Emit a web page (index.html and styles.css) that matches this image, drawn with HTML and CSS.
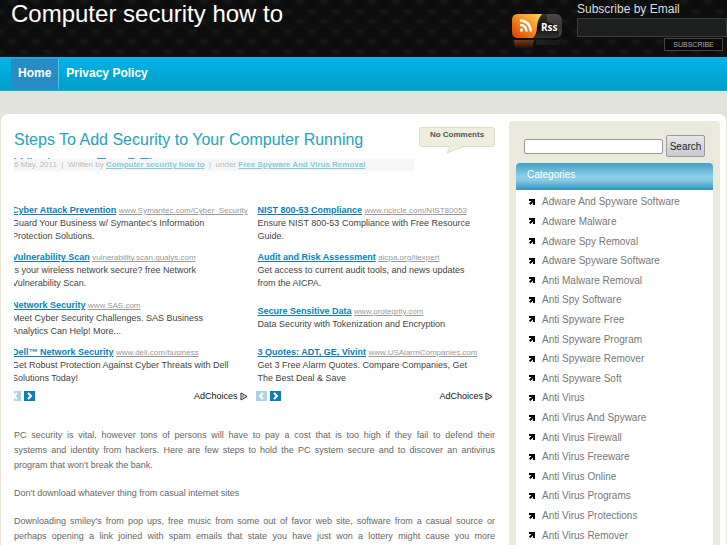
FILE: index.html
```html
<!DOCTYPE html>
<html lang="en">
<head>
<meta charset="utf-8">
<meta name="viewport" content="width=device-width, initial-scale=1">
<title>Computer security how to</title>
<link rel="stylesheet" href="styles.css">
</head>
<body>
<header class="header">
  <h1 class="site-title">Computer security how to</h1>
  <a class="rss" href="#" aria-label="Rss">
    <svg width="52" height="42" viewBox="0 0 52 42">
      <defs>
        <linearGradient id="dark" x1="0" y1="0" x2="0" y2="1"><stop offset="0" stop-color="#333"/><stop offset=".55" stop-color="#0d0d0d"/><stop offset="1" stop-color="#333"/></linearGradient>
        <linearGradient id="fire" x1="0" y1="1" x2="1" y2="0"><stop offset="0" stop-color="#d63c08"/><stop offset=".5" stop-color="#f78a1c"/><stop offset="1" stop-color="#ffd65a"/></linearGradient>
        <linearGradient id="glow" x1="0" y1="0" x2="0" y2="1"><stop offset="0" stop-color="#a34c10" stop-opacity=".7"/><stop offset="1" stop-color="#a34c10" stop-opacity="0"/></linearGradient>
      </defs>
      <rect x="1" y="1" width="50" height="24" rx="7" fill="url(#dark)"/>
      <path d="M36 1H44Q51 1 51 8V19Q51 22 48 24Q49 12 36 9Z" fill="#666" opacity=".45"/>
      <path d="M7 1H31Q27 6 26 13Q26 21 22 25H7Q1 25 1 19V7Q1 1 7 1Z" fill="url(#fire)"/>
      <path d="M3 27H23L21 36H4Z" fill="url(#glow)"/>
      <path d="M25 27H49L48 32H25Z" fill="#333" opacity=".4"/>
      <circle cx="10.500" cy="17" r="1.700" fill="#fff"/>
      <path d="M9 12Q15 12 15.500 18.500M9 7.500Q19 8 20 18.500" fill="none" stroke="#fff" stroke-width="2.400"/>
      <text x="30" y="18" class="rss-text">Rss</text>
    </svg>
  </a>
  <form class="subscribe">
    <label for="email">Subscribe by Email</label>
    <input id="email" type="text">
    <button type="button">SUBSCRIBE</button>
  </form>
</header>
<nav class="nav">
  <a class="current" href="#">Home</a>
  <a href="#">Privacy Policy</a>
</nav>
<div class="page">
  <main class="content">
    <div class="post-head">
      <h2><a href="#">Steps To Add Security to Your Computer Running Windows – Top 5 Tips</a></h2>
      <a class="comments" href="#">No Comments
        <svg width="17" height="8" viewBox="0 0 17 8"><path d="M4 0L1 7L17 0Z" fill="#eeeedf"/><path d="M4 1L1 7L16 1" fill="none" stroke="#d9dac6"/></svg>
      </a>
    </div>
    <p class="meta">6 May, 2011 &nbsp;|&nbsp; Written by <a href="#">Computer security how to</a> &nbsp;|&nbsp; under <a href="#">Free Spyware And Virus Removal</a></p>
    <div class="ads">
      <section class="ad first">
        <div class="list">
          <div><a href="#">Cyber Attack Prevention</a> <a class="url" href="#">www.Symantec.com/Cyber_Security</a><p>Guard Your Business w/ Symantec's Information<br>Protection Solutions.</p></div>
          <div><a href="#">Vulnerability Scan</a> <a class="url" href="#">vulnerability.scan.qualys.com</a><p>Is your wireless network secure? free Network<br>Vulnerability Scan.</p></div>
          <div><a href="#">Network Security</a> <a class="url" href="#">www.SAS.com</a><p>Meet Cyber Security Challenges. SAS Business<br>Analytics Can Help! More...</p></div>
          <div><a href="#">Dell™ Network Security</a> <a class="url" href="#">www.dell.com/business</a><p>Get Robust Protection Against Cyber Threats with Dell<br>Solutions Today!</p></div>
        </div>
        <div class="ad-foot">
          <button type="button" class="prev" aria-label="Previous"><svg width="11" height="10" viewBox="0 0 11 10"><path d="M7 2L4 5L7 8"/></svg></button>
          <button type="button" aria-label="Next"><svg width="11" height="10" viewBox="0 0 11 10"><path d="M4 2L7 5L4 8"/></svg></button>
          <a href="#">AdChoices <svg width="8" height="9" viewBox="0 0 8 9"><path d="M1 1L7 4.500L1 8ZM3 3.500V5.500" fill="none" stroke="#222"/></svg></a>
        </div>
      </section>
      <section class="ad">
        <div class="list">
          <div><a href="#">NIST 800-53 Compliance</a> <a class="url" href="#">www.ncircle.com/NIST80053</a><p>Ensure NIST 800-53 Compliance with Free Resource<br>Guide.</p></div>
          <div><a href="#">Audit and Risk Assessment</a> <a class="url" href="#">aicpa.org/itexpert</a><p>Get access to current audit tools, and news updates<br>from the AICPA.</p></div>
          <div class="short"><a href="#">Secure Sensitive Data</a> <a class="url" href="#">www.protegrity.com</a><p>Data Security with Tokenization and Encryption</p></div>
          <div><a href="#">3 Quotes: ADT, GE, Vivint</a> <a class="url" href="#">www.USAlarmCompanies.com</a><p>Get 3 Free Alarm Quotes. Compare Companies, Get<br>The Best Deal &amp; Save</p></div>
        </div>
        <div class="ad-foot">
          <button type="button" class="prev" aria-label="Previous"><svg width="11" height="10" viewBox="0 0 11 10"><path d="M7 2L4 5L7 8"/></svg></button>
          <button type="button" aria-label="Next"><svg width="11" height="10" viewBox="0 0 11 10"><path d="M4 2L7 5L4 8"/></svg></button>
          <a href="#">AdChoices <svg width="8" height="9" viewBox="0 0 8 9"><path d="M1 1L7 4.500L1 8ZM3 3.500V5.500" fill="none" stroke="#222"/></svg></a>
        </div>
      </section>
    </div>
    <div class="text">
      <p><span class="full">PC security is vital, however tons of persons will have to pay a cost that is too high if they fail to defend their</span>
      <span class="full">systems and identity from hackers. Here are few steps to hold the PC system secure and to discover an antivirus</span>
      <span>program that won't break the bank.</span></p>
      <p>Don't download whatever thing from casual internet sites</p>
      <p><span class="full">Downloading smiley's from pop ups, free music from some out of favor web site, software from a casual source or</span>
      <span class="full">perhaps opening a link joined with spam emails that state you have just won a lottery might cause you more</span></p>
    </div>
  </main>
  <aside class="sidebar">
    <form class="search">
      <input type="text" aria-label="Search">
      <button type="button">Search</button>
    </form>
    <h3>Categories</h3>
    <ul>
      <li><a href="#">Adware And Spyware Software</a></li>
      <li><a href="#">Adware Malware</a></li>
      <li><a href="#">Adware Spy Removal</a></li>
      <li><a href="#">Adware Spyware Software</a></li>
      <li><a href="#">Anti Malware Removal</a></li>
      <li><a href="#">Anti Spy Software</a></li>
      <li><a href="#">Anti Spyware Free</a></li>
      <li><a href="#">Anti Spyware Program</a></li>
      <li><a href="#">Anti Spyware Remover</a></li>
      <li><a href="#">Anti Spyware Soft</a></li>
      <li><a href="#">Anti Virus</a></li>
      <li><a href="#">Anti Virus And Spyware</a></li>
      <li><a href="#">Anti Virus Firewall</a></li>
      <li><a href="#">Anti Virus Freeware</a></li>
      <li><a href="#">Anti Virus Online</a></li>
      <li><a href="#">Anti Virus Programs</a></li>
      <li><a href="#">Anti Virus Protections</a></li>
      <li><a href="#">Anti Virus Remover</a></li>
    </ul>
  </aside>
</div>
<script src="icons.js"></script>
</body>
</html>
```
FILE: icons.js
```js
// Put the arrow bullet in front of every category link.
const arrow = '<svg width="6" height="6" viewBox="0 0 6 6" aria-hidden="true"><path d="M0 0H6V6H4V3.500L1.500 6L0 4.500L2.500 2H0Z"/></svg>';
document.querySelectorAll('.sidebar li').forEach(li => li.insertAdjacentHTML('afterbegin', arrow));
```
FILE: styles.css
```css
* { box-sizing: border-box; }
body {
  margin: 0;
  min-height: 100vh;
  display: flex;
  flex-direction: column;
  background: #e2e4dc;
  font-family: "Liberation Sans", Arial, sans-serif;
  font-size: 11px;
  color: #666;
}
h1, h2, h3, p, ul { margin: 0; padding: 0; font-weight: normal; }
svg { display: block; }

.header {
  display: flex;
  align-items: flex-start;
  height: 57px;
  background:
    radial-gradient(ellipse at 50% 60%, #0d0d0d 0 35%, transparent 65%) 0 0 / 24px 20px,
    radial-gradient(ellipse at 50% 60%, #0d0d0d 0 35%, transparent 65%) 12px 10px / 24px 20px,
    #1a1a1a;
}
.site-title {
  flex: 1;
  padding-left: 11px;
  font-size: 24px;
  line-height: 27px;
  color: #fff;
  white-space: nowrap;
}
.rss { margin: 13px 14px 0 0; }
.rss-text { font: bold 10px "Open Sans", sans-serif; fill: #fff; }
.subscribe {
  display: flex;
  flex-direction: column;
  width: 150px;
  color: #ddd;
}
.subscribe label { font-size: 12px; line-height: 18px; }
.subscribe input {
  width: 100%;
  height: 19px;
  border: 1px solid #3a3c3c;
  background: #1d1f1e;
  color: #ddd;
}
.subscribe button {
  align-self: flex-end;
  width: 59px;
  height: 13px;
  margin: 1px 4px 0 0;
  padding: 0;
  border: 1px solid #444;
  background: #080808;
  color: #aaa;
  font: 7px/11px "Liberation Sans", Arial, sans-serif;
}

.nav {
  display: flex;
  height: 34px;
  padding: 2px 11px;
  background: linear-gradient(#03b5e9, #029dc8 94%, #08b2dc);
}
.nav a {
  padding: 0 7px;
  color: #fff;
  font-size: 12px;
  font-weight: bold;
  line-height: 28px;
  text-decoration: none;
}
.nav .current { background: #278bc5; border-right: 1px solid #53c0e8; }

.page {
  flex: 1;
  display: flex;
  align-items: stretch;
  margin: 23px 0 0;
  padding: 7px 6px 0 13px;
  gap: 14px;
  border: 1px solid #e6e6d2;
  border-width: 0 1px;
  border-radius: 8px 8px 0 0;
  background: #fff;
}
.content { flex: 1; min-width: 0; }
.post-head {
  display: flex;
  justify-content: space-between;
  height: 38px;
  padding-top: 6px;
}
h2 { flex: 1; height: 32px; overflow: hidden; font-size: 16px; line-height: 25px; }
h2 a { color: #22a3c3; text-decoration: none; }
.comments {
  position: relative;
  width: 76px;
  height: 20px;
  border: 1px solid #dcddc9;
  border-radius: 3px;
  background: #eeeedf;
  color: #555;
  font-size: 8px;
  font-weight: bold;
  line-height: 14px;
  text-align: center;
  text-decoration: none;
}
.comments svg { position: absolute; left: 26px; top: 18px; }
.meta {
  width: 400px;
  height: 12px;
  background: #f6f6f6;
  font-size: 8px;
  line-height: 11px;
  color: #bbb;
  white-space: nowrap;
}
.meta a { color: #7fcde0; font-weight: bold; }
.ads { display: flex; gap: 2px; margin-top: 33px; }
.ad { flex: 1; min-width: 0; }
.list {
  display: flex;
  flex-direction: column;
  justify-content: space-between;
  height: 181px;
  padding-left: 2px;
  font-size: 9px;
  line-height: 13px;
  white-space: nowrap;
}
.list .short { padding: 7px 0; }
.list a { color: #0a7fba; font-weight: bold; }
.list .url { color: #999; font-size: 8px; font-weight: normal; }
.list p { color: #444; }
.first { overflow: hidden; }
.first .list, .first .ad-foot { margin-left: -4px; }
.ad-foot {
  display: flex;
  align-items: center;
  gap: 3px;
  height: 12px;
  margin-top: 5px;
}
.ad-foot button {
  width: 11px;
  height: 10px;
  padding: 0;
  border: 0;
  background: #0a7fba;
}
.ad-foot .prev { background: #acd4e8; }
.ad-foot button path { fill: none; stroke: #fff; stroke-width: 2; }
.ad-foot a {
  display: flex;
  align-items: center;
  gap: 2px;
  margin-left: auto;
  margin-right: 2px;
  color: #111;
  font-size: 9px;
  text-decoration: none;
}
.first .ad-foot a { margin-right: 6px; }
.text { margin-top: 26px; font-size: 9px; line-height: 15px; }
.text p { margin-bottom: 13px; }
.text p:last-child { margin-bottom: 0; }
.text span { display: block; white-space: nowrap; }
.text .full { text-align-last: justify; }

.sidebar {
  display: flex;
  flex-direction: column;
  width: 211px;
  padding: 14px 7px 0;
  border-radius: 4px 4px 0 0;
  background: #e9eadc;
}
.search {
  display: flex;
  align-items: center;
  gap: 3px;
  margin: 0 8px 6px;
}
.search input {
  flex: 1;
  min-width: 0;
  height: 15px;
  border: 1px solid #999;
  border-radius: 2px;
  background: #fff;
}
.search button {
  width: 39px;
  height: 22px;
  padding: 0;
  border: 1px solid #9a9aa0;
  border-radius: 2px;
  background: linear-gradient(#e6e6ea, #c9cad2);
  color: #222;
  font: 10px "Liberation Sans", Arial, sans-serif;
}
h3 {
  height: 27px;
  padding-left: 11px;
  border-radius: 4px 4px 0 0;
  background: linear-gradient(#4a9dc1, #5fb2d4 20%, #8fcde6 50%, #85c8e3 65%, #2f93bc);
  color: #fff;
  font-size: 10px;
  line-height: 23px;
}
.sidebar ul {
  flex: 1;
  display: grid;
  grid-auto-rows: 1fr;
  padding: 2px 0 0 13px;
  background: #fff;
  list-style: none;
}
.sidebar li {
  display: flex;
  align-items: center;
  gap: 7px;
  font-size: 10px;
  white-space: nowrap;
}
.sidebar li a { color: #777; text-decoration: none; }
```
